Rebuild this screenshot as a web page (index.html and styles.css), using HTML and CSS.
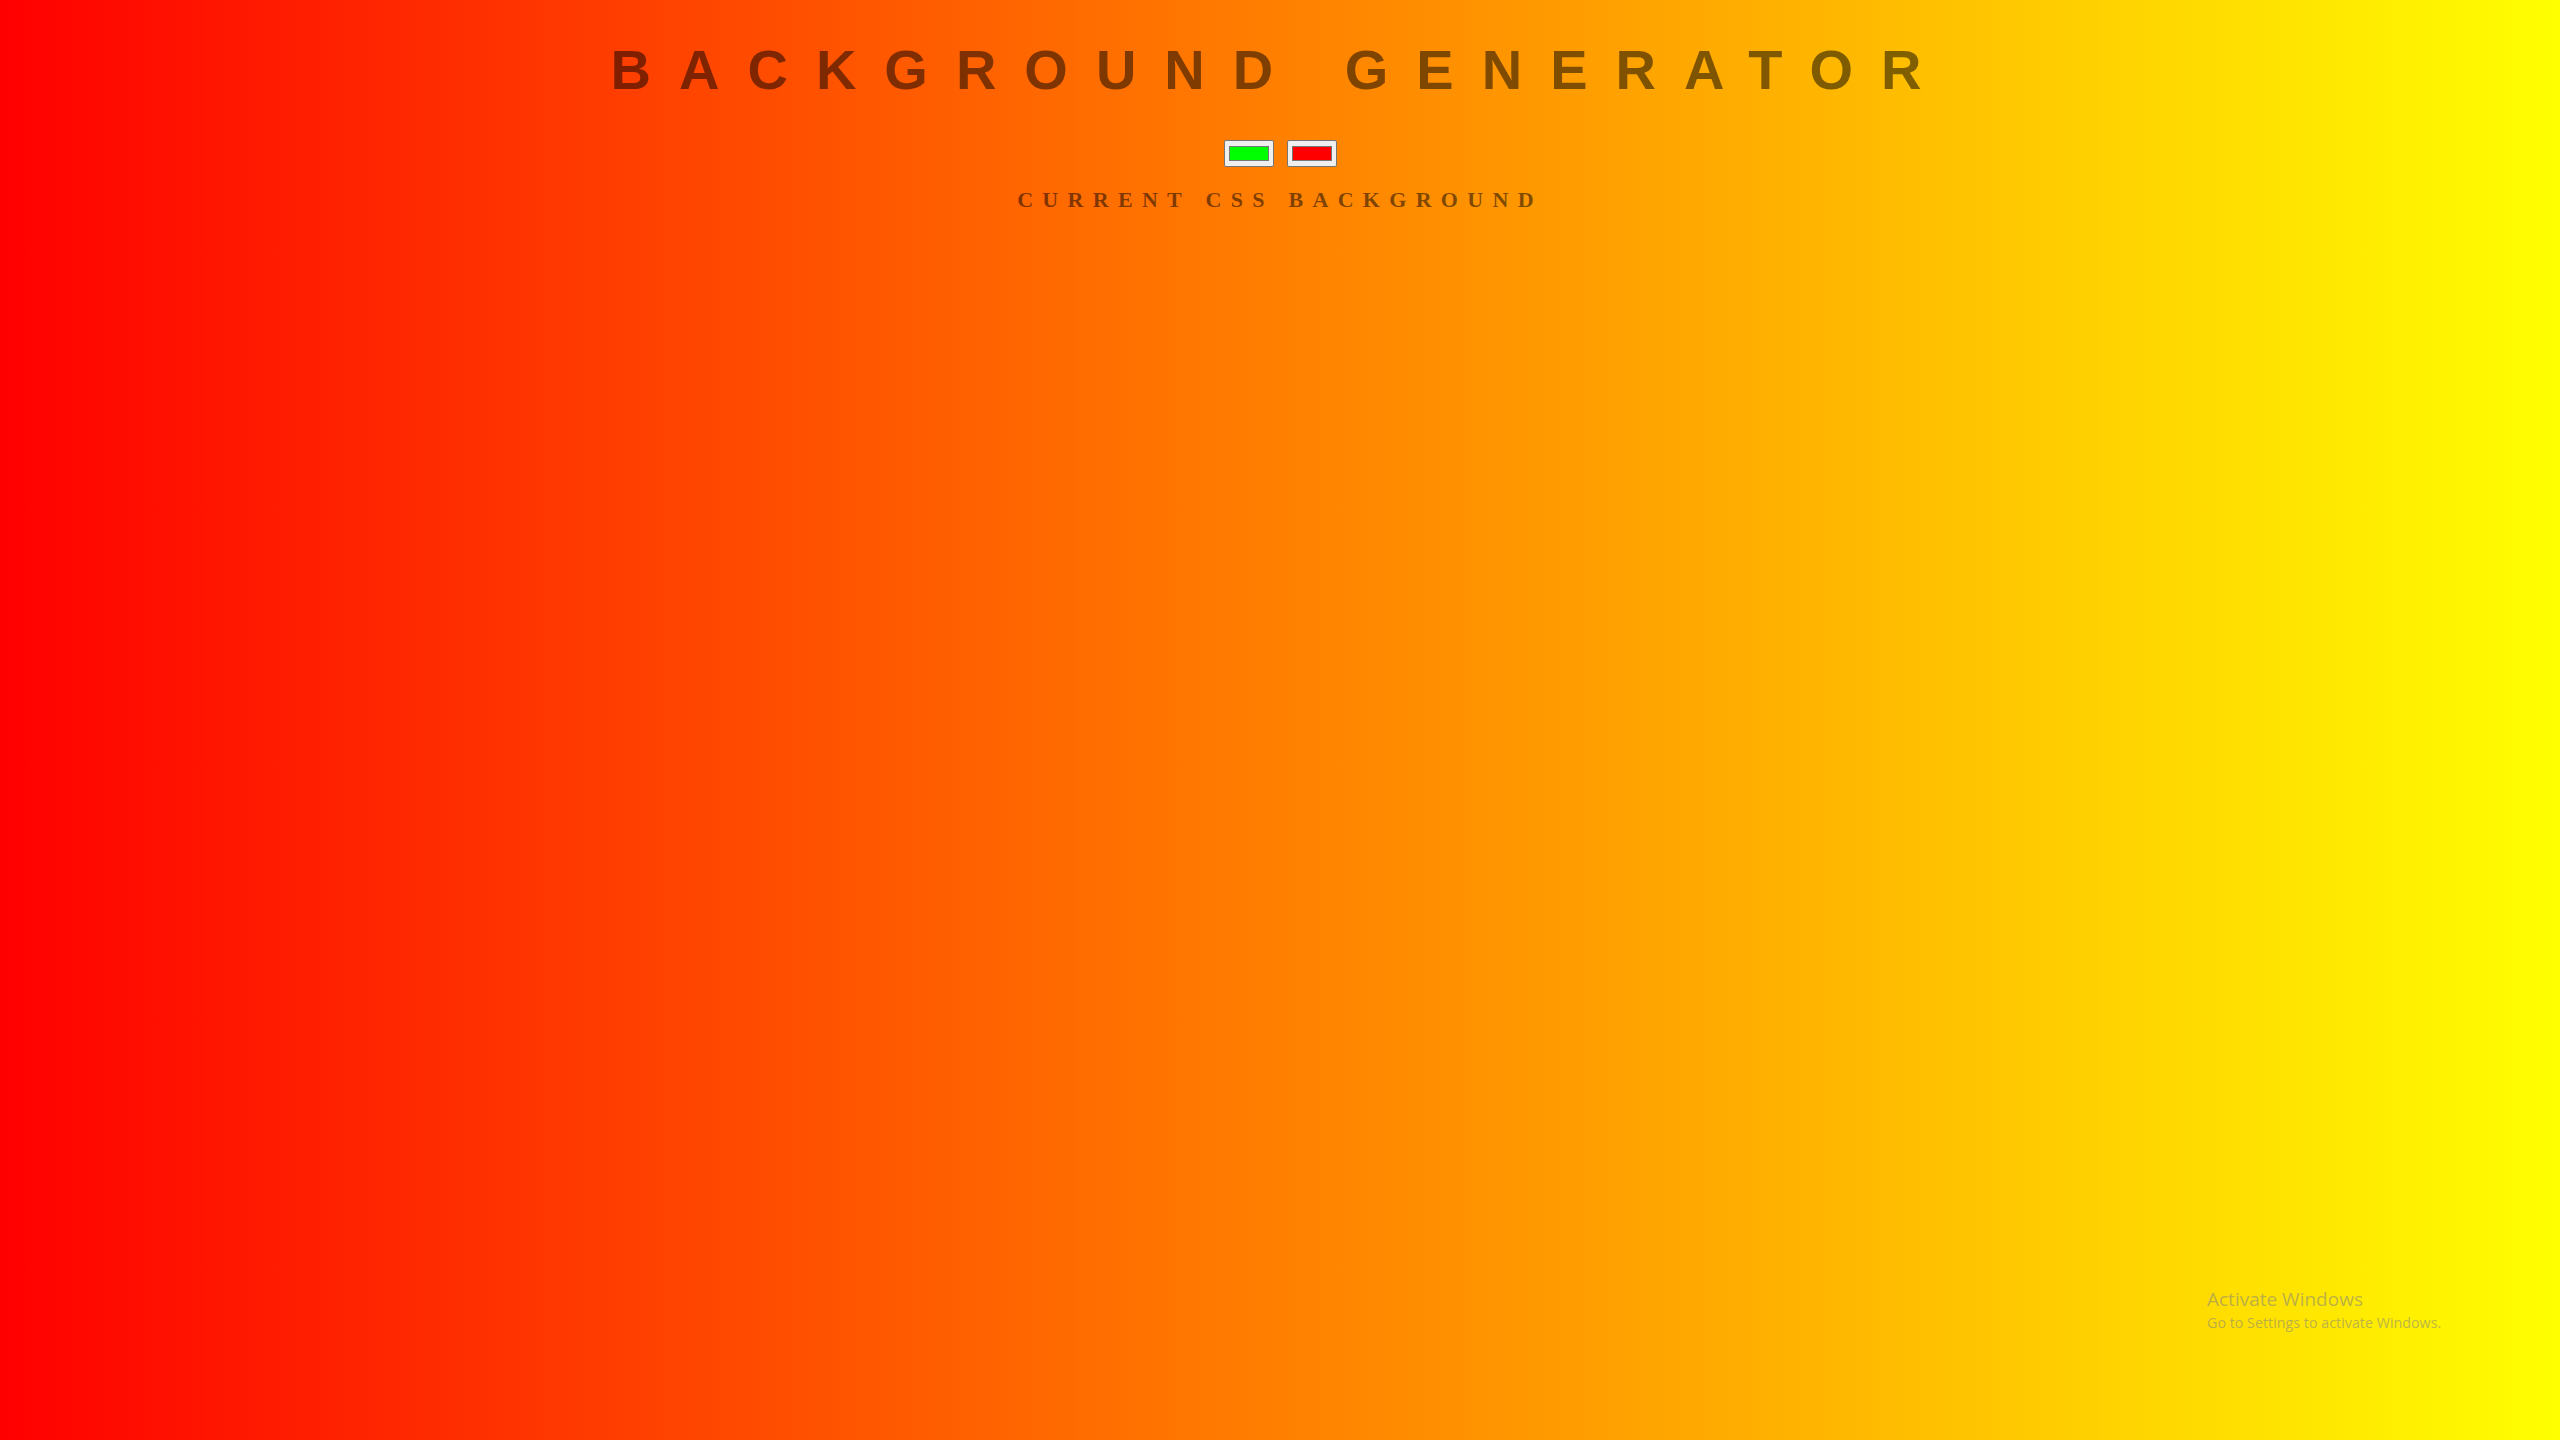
FILE: index.html
```
<!DOCTYPE html>
<html lang="en">
<head>
<meta charset="utf-8">
<title>Background Generator</title>
<link rel="stylesheet" href="styles.css">
</head>
<body class="page">
  <h1 class="title">Background Generator</h1>
  <div class="swatches">
    <input class="color-input" type="color" value="#00ff00">
    <input class="color-input" type="color" value="#ff0000">
  </div>
  <h3 class="subtitle">Current CSS Background</h3>
  <div class="watermark">
    <div class="watermark-title">Activate Windows</div>
    <div class="watermark-text">Go to Settings to activate Windows.</div>
  </div>
</body>
</html>
```
FILE: styles.css
```
html {
  margin: 0;
  padding: 0;
}

.page {
  margin: 0;
  min-height: 100vh;
  background: linear-gradient(to right, #ff0000, #ffff00);
  color: rgba(0, 0, 0, 0.5);
  text-align: center;
  text-transform: uppercase;
  font-family: "Liberation Serif", "Times New Roman", serif;
  position: relative;
  overflow: hidden;
}

.title {
  margin: 37.5px 0 38.5px;
  font-family: "Liberation Sans", Arial, sans-serif;
  font-weight: 700;
  font-size: 56px;
  line-height: 64px;
  letter-spacing: 28px;
  color: rgba(0, 0, 0, 0.5);
}

.swatches {
  display: flex;
  justify-content: center;
  gap: 13px;
  height: 27px;
}

.color-input {
  margin: 0;
  width: 50px;
  height: 27px;
  box-sizing: border-box;
  padding: 1px 2px;
  border: 1px solid #767676;
  border-radius: 2px;
  background-color: #efefef;
  cursor: pointer;
}

.subtitle {
  margin: 20px 0 0;
  font-family: "Liberation Serif", "Times New Roman", serif;
  font-weight: 700;
  font-size: 22px;
  line-height: normal;
  letter-spacing: 9.3px;
  color: rgba(0, 0, 0, 0.5);
}

.watermark {
  position: absolute;
  left: 2207px;
  top: 1286px;
  text-align: left;
  text-transform: none;
  font-family: "Open Sans", "Noto Sans", sans-serif;
  color: rgba(130, 130, 130, 0.55);
  letter-spacing: 0;
}

.watermark-title {
  font-size: 19px;
  line-height: 26px;
}

.watermark-text {
  margin-top: 2px;
  font-size: 14.3px;
  line-height: 18px;
}
```
